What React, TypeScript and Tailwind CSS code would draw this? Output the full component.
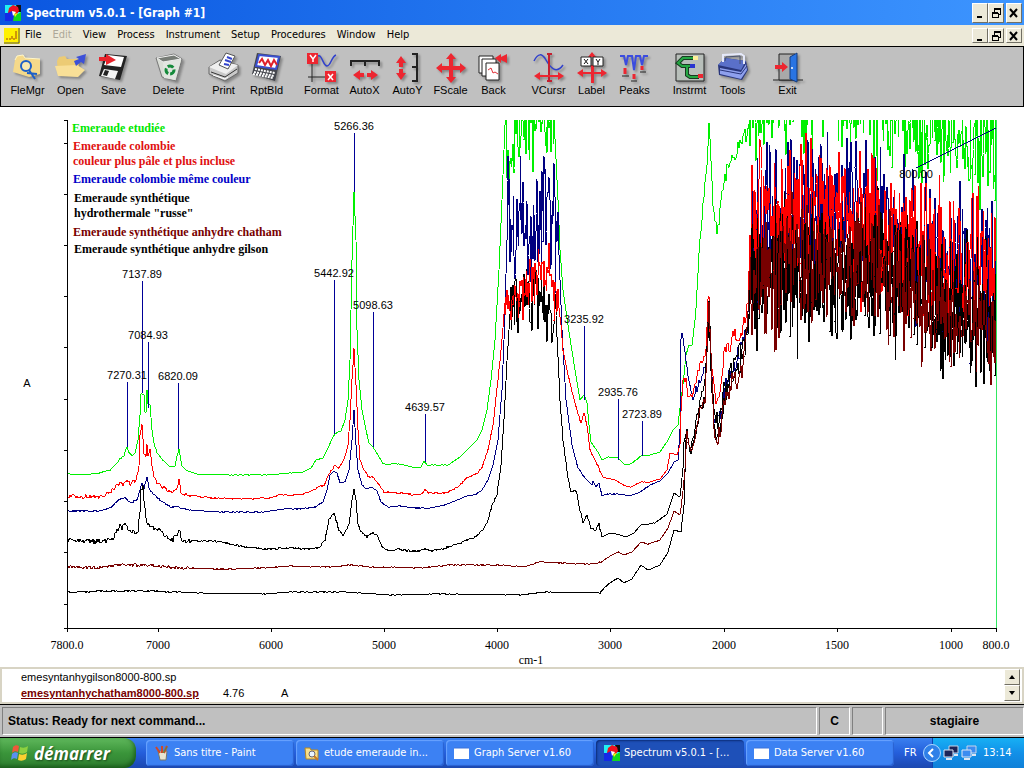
import type { ReactNode } from "react";

type Point = [number, number];

const menuItems = ["File", "Edit", "View", "Process", "Instrument", "Setup", "Procedures", "Window", "Help"];

/* ---------- toolbar drawings ---------- */

function Icon({ children }: { children: ReactNode }) {
  return (
    <svg viewBox="0 0 32 32" className="h-8 w-8 drop-shadow-[2px_2px_1px_rgba(0,0,0,0.3)]" aria-hidden="true">
      {children}
    </svg>
  );
}

const FileManagerIcon = () => (
  <Icon>
    <path d="M3 8 5 4l6-1 2 3 15 1v15L17 25 1 20z" fill="#f5d98a" />
    <path d="M3 8 5 4l6-1 2 3 15 1" fill="none" stroke="#fff6c8" />
    <circle cx="14" cy="14" r="5" fill="#f8e8b0" stroke="#1c5fc8" strokeWidth="2" />
    <path d="m17 18 6 9M15 21l10 1" fill="none" stroke="#1c5fc8" strokeWidth="2" />
  </Icon>
);

const OpenIcon = () => (
  <Icon>
    <path d="M2 9 4 5l6-1 2 3h12l-1 17L3 24z" fill="#eccb74" />
    <path d="M0 14 22 13l8 5-7 7-20-1z" fill="#f8df97" />
    <path d="m19 9 5-2-3-2 10-3-2 10-3-2-5 4z" fill="#3c50d8" />
  </Icon>
);

const SaveIcon = () => (
  <Icon>
    <path d="m7 2 22 2-7 24L1 24z" fill="#222" />
    <path d="m10 3 16 2-3 10-17-2z" fill="#fff" />
    <path d="m6 17 14 2-3 8-14-3z" fill="#f4f4f4" />
    <path d="m7 18 4 1-2 5-4-1z" fill="#222" />
    <path d="M1 5h7V2l10 6-10 5v-4H1z" fill="#e8232b" />
  </Icon>
);

const DeleteIcon = () => (
  <Icon>
    <path d="M3 6 21 2l8 5-6 22-14-4z" fill="#d9ddd6" stroke="#777" />
    <path d="m4 6 17-3 7 4-18 3z" fill="#777c76" stroke="#eee" />
    <path d="m10 10 1 16 11 2 6-20z" fill="#e2e5e0" />
    <circle cx="17" cy="18" r="4" fill="none" stroke="#158a3a" strokeWidth="3" strokeDasharray="6 2" />
  </Icon>
);

const PrintIcon = () => (
  <Icon>
    <path d="m1 15 11-7 18 5v8L17 29 1 22z" fill="#c9c9c9" stroke="#666" />
    <path d="m1 15 11-6 18 4-12 9z" fill="#efefef" />
    <path d="M11 13 18 1l9 3-7 13z" fill="#fff" stroke="#555" />
    <path d="m17 8 6 2m-4-5 5 2m-8 5 5 1" stroke="#3344cc" strokeWidth="2" />
    <path d="m3 20 14 5 12-8" fill="none" stroke="#333" />
    <path d="m5 23 12 4 3-2" stroke="#fff" fill="none" />
  </Icon>
);

const ReportIcon = () => (
  <Icon>
    <path d="m6 1 24 3-6 25L1 22z" fill="#44464d" />
    <path d="m8 3 20 2-3 12L5 14z" fill="#fff" stroke="#3b4fcf" strokeWidth="2" />
    <path d="m8 11 3-4 3 6 3-5 3 6 3-6 3 5" fill="none" stroke="#e0202a" strokeWidth="2" />
    <path d="m4 17 20 4M3 20l20 4M2 22l20 4" stroke="#fff" strokeWidth="2" strokeDasharray="2 1" />
  </Icon>
);

const FormatIcon = () => (
  <Icon>
    <path d="M6 12v18M2 25h20" stroke="#222" strokeWidth="1" />
    <path d="M12 4c4-2 5 10 9 10s4-9 9-11" fill="none" stroke="#3040cc" strokeWidth="1.5" />
    <path d="M1 1h11v11H1zM19 19h11v11H19z" fill="#ed2630" />
    <path d="m4 3 3 4 3-4M7 7v3m15 12 5 6m0-6-5 6" fill="none" stroke="#fff" strokeWidth="1.5" />
  </Icon>
);

const AutoXIcon = () => (
  <Icon>
    <path d="M2 14V9h28v5M16 9v5" fill="none" stroke="#222" strokeWidth="2" />
    <path d="m4 23 7-5v3h4v4h-4v3zM29 23l-7-5v3h-4v4h4v3z" fill="#ed2630" />
  </Icon>
);

const AutoYIcon = () => (
  <Icon>
    <path d="M20 2h5v27h-5M25 15h-5" fill="none" stroke="#222" strokeWidth="2" />
    <path d="m9 4 5 7h-3v4H7v-4H4zM9 28l5-7h-3v-4H7v4H4z" fill="#ed2630" />
  </Icon>
);

const FullScaleIcon = () => (
  <Icon>
    <path
      d="m16 1 5 6h-3v7h7v-3l6 5-6 5v-3h-7v7h3l-5 6-5-6h3v-7H7v3l-6-5 6-5v3h7V7h-3z"
      fill="#ed2630"
    />
  </Icon>
);

const BackIcon = () => (
  <Icon>
    <path d="M1 4h14v17H1z" fill="#fff" stroke="#222" />
    <path d="M4 7h14v17H4z" fill="#fff" stroke="#222" />
    <path d="M8 11h13v17H8z" fill="#fff" stroke="#222" />
    <path d="m10 18 3-2 2 5 2-1 3 2" fill="none" stroke="#e03038" />
    <path d="m17 6 6-4v3l6-3v9l-6-3v3z" fill="#ed2630" />
  </Icon>
);

const CursorIcon = () => (
  <Icon>
    <path d="M1 9C5 1 9 1 13 8s10 15 17 5" fill="none" stroke="#3040cc" strokeWidth="1.5" />
    <path d="M14 2h5m-5 27h5M16 2v27" stroke="#c51f30" strokeWidth="2" />
    <path d="m1 24 6-4v3h18v-3l6 4-6 4v-3H7v3z" fill="#ed2630" />
  </Icon>
);

const LabelIcon = () => (
  <Icon>
    <path d="m16 0 4 5H12zM15 13h3v18h-3z" fill="#ed2630" />
    <path d="m1 21 6-4v3h18v-3l6 4-6 4v-3H7v3z" fill="#ed2630" />
    <path d="M5 5h10v9H5zM17 5h10v9H17z" fill="#fff" stroke="#222" />
    <path d="m8 7 4 5m0-5-4 5m12-5 2 3 2-3m-2 3v3" fill="none" stroke="#111" />
  </Icon>
);

const PeaksIcon = () => (
  <Icon>
    <path d="M1 4h4l2 9 2-9h4l2 14 2-14h4l2 9 2-9h4" fill="none" stroke="#3b4ce0" strokeWidth="2" />
    <path d="M6 16v6m9 0v5m8-13v4" stroke="#ed2630" strokeWidth="3" />
    <path d="M3 24h7m2 5h6m3-9h6" stroke="#222" strokeWidth="1" />
  </Icon>
);

const InstrumentIcon = () => (
  <Icon>
    <path d="M2 2h28v27H2z" fill="#b8bfba" stroke="#222" />
    <path d="M21 6H9l-5 5 4 3h10m-5 0v9l3 2h9" fill="none" stroke="#183b20" strokeWidth="4" />
    <path d="M21 6H9l-5 5 4 3h10m-5 0v9l3 2h9" fill="none" stroke="#25a844" strokeWidth="2" />
    <path d="M19 4h5v4h-5z" fill="#ffee9a" />
    <path d="M16 12h5v4h-5z" fill="#2835d0" />
    <path d="M24 22h5v4h-5z" fill="#ed2630" />
  </Icon>
);

const ToolsIcon = () => (
  <Icon>
    <path d="m1 13 7-7 21 3 2 9-6 10L2 23z" fill="#29367c" />
    <path d="m1 13 7-7 21 3-5 9z" fill="#5a70c9" />
    <path d="m3 16 21 4 5-8 1 6-6 9-21-5z" fill="#8ea0ed" />
    <path d="m3 18 21 4 6-8" fill="none" stroke="#29367c" />
    <path d="M6 10V3l18-1 3 2v8" fill="none" stroke="#e5e9fa" strokeWidth="2" />
    <path d="M8 9 9 5l14-1v8" fill="none" stroke="#49536e" />
  </Icon>
);

const ExitIcon = () => (
  <Icon>
    <path d="M1 28h30" stroke="#222" strokeWidth="1" />
    <path d="M7 2h16v26H7z" fill="#a9a9a9" stroke="#222" />
    <path d="m18 5 7-4v29l-7-3z" fill="#2974e3" stroke="#153c7e" />
    <circle cx="20" cy="16" r="1" fill="#fff" />
    <path d="M3 13h7v-3l6 5-6 5v-3H3z" fill="#ed2630" />
  </Icon>
);

const toolGroups = [
  [
    { label: "FleMgr", icon: <FileManagerIcon /> },
    { label: "Open", icon: <OpenIcon /> },
    { label: "Save", icon: <SaveIcon /> },
  ],
  [{ label: "Delete", icon: <DeleteIcon /> }],
  [
    { label: "Print", icon: <PrintIcon /> },
    { label: "RptBld", icon: <ReportIcon /> },
  ],
  [
    { label: "Format", icon: <FormatIcon /> },
    { label: "AutoX", icon: <AutoXIcon /> },
    { label: "AutoY", icon: <AutoYIcon /> },
    { label: "FScale", icon: <FullScaleIcon /> },
    { label: "Back", icon: <BackIcon /> },
  ],
  [
    { label: "VCursr", icon: <CursorIcon /> },
    { label: "Label", icon: <LabelIcon /> },
    { label: "Peaks", icon: <PeaksIcon /> },
  ],
  [
    { label: "Instrmt", icon: <InstrumentIcon /> },
    { label: "Tools", icon: <ToolsIcon /> },
  ],
  [{ label: "Exit", icon: <ExitIcon /> }],
];

/* ---------- small shared icons ---------- */

function SpectrumLogo() {
  return (
    <svg viewBox="0 0 16 16" className="h-4 w-4 shrink-0" aria-hidden="true">
      <path d="M0 0h16v16H0z" fill="#20f0f0" />
      <path d="M0 8h5l3 8H0z" fill="#1428e8" />
      <path d="M11 0h5v7h-3z" fill="#111" />
      <path d="M4 3 8 0l5 2 1 4-2 3H7L3 8z" fill="#f01020" />
      <path d="m7 8 6 1 3-2v9H8z" fill="#10d820" />
      <path d="m3 8 4-2 2 4-1 6-4-2z" fill="#1428e8" />
      <path d="m7 6 4 1-3 4z" fill="#fff" />
      <path d="m9 9 4-1-3 4z" fill="#ffe820" />
    </svg>
  );
}

function WindowButtons({ height }: { height: string }) {
  const base =
    "flex w-4 items-center justify-center border border-t-white border-l-white border-r-[#716f64] border-b-[#716f64] bg-[#ece9d8]";
  return (
    <div className="flex">
      <button aria-label="Minimize" className={`${base} ${height}`}>
        <svg viewBox="0 0 12 12" className="h-3 w-3"><path d="M3 10h5" stroke="#000" strokeWidth="2" /></svg>
      </button>
      <button aria-label="Restore" className={`${base} ${height}`}>
        <svg viewBox="0 0 12 12" className="h-3 w-3" shapeRendering="crispEdges">
          <path d="M4 2h6v5H8M4 2v3M2 6h6v4H2z" fill="none" stroke="#000" />
          <path d="M4 2h7M2 6h6" stroke="#000" strokeWidth="2" />
        </svg>
      </button>
      <button aria-label="Close" className={`${base} ${height} ml-0.5`}>
        <svg viewBox="0 0 12 12" className="h-3 w-3"><path d="m2 2 7 8m0-8-7 8" stroke="#000" strokeWidth="2" /></svg>
      </button>
    </div>
  );
}

/* ---------- spectra ---------- */

// Small seeded generator so that the detector noise is the same on every render.
function seeded(seed: number) {
  let s = seed;
  return () => {
    s = (s * 1664525 + 1013904223) % 4294967296;
    return s / 4294967296;
  };
}

function valueAt(points: Point[], x: number) {
  for (let i = 1; i < points.length; i++) {
    if (x <= points[i][0]) {
      const [x0, y0] = points[i - 1];
      const [x1, y1] = points[i];
      return y0 + ((y1 - y0) * (x - x0)) / (x1 - x0);
    }
  }
  return points[points.length - 1][1];
}

function jitter(points: Point[], amount: number, rand: () => number, limit: number) {
  const out: Point[] = [];
  const last = points[points.length - 1][0];
  for (let x = points[0][0]; x <= last; x++) {
    const quiet = x > 190 && x < 600 ? 0.4 : 1;
    const scale = x > 600 && x < 680 ? 0.5 : x > 715 ? limit : x > 695 ? limit / 2 : amount * quiet;
    out.push([x, valueAt(points, x) + (rand() - 0.5) * scale]);
  }
  return out;
}

function noise(center: Point[], spread: number, rand: () => number) {
  const out: Point[] = [];
  const last = center[center.length - 1][0];
  for (let x = center[0][0]; x <= last; x += 0.625) {
    const r = rand() + rand() + rand() - 1.5;
    out.push([Math.round(x), valueAt(center, x) + r * spread]);
  }
  return out;
}

const toPoints = (points: Point[]) => points.map(([x, y]) => `${x},${y.toFixed(1)}`).join(" ");

type Series = {
  color: string;
  seed: number;
  wobble: number;
  tail: number;
  left: Point[];
  plateau?: Point[];
  plateauSpread: number;
  middle: Point[];
  end: Point[];
  endSpread: number;
};

const series: Series[] = [
  {
    color: "#00f000", seed: 11, wobble: 0.8, tail: 16, plateauSpread: 45, endSpread: 58,
    left: [[67,474],[85,475],[100,473],[110,470],[117,463],[120,459],[124,456],[126,449],[127,447],[129,453],[132,456],[135,453],[138,440],[140,415],[141,394],[144,395],[145,412],[146,413],[147,390],[148,404],[150,405],[152,430],[154,443],[157,453],[163,460],[170,467],[175,466],[177,456],[179,449],[180,455],[182,466],[187,471],[197,474],[230,475],[265,475],[290,473],[303,472],[311,468],[316,460],[323,458],[328,448],[333,437],[336,433],[341,431],[345,420],[348,400],[350,360],[352,260],[354,192],[356,240],[357,330],[359,380],[362,410],[366,430],[369,443],[373,447],[378,455],[383,464],[400,464],[416,468],[421,467],[424,461],[427,465],[448,465],[460,457],[470,447],[477,440],[482,430],[487,410],[491,380],[495,340],[499,270],[502,200],[505,125]],
    plateau: [[505,130],[508,155],[512,155],[517,125],[530,112],[545,112],[554,118]],
    middle: [[554,118],[558,200],[560,250],[563,290],[569,332],[575,370],[580,400],[584,395],[587,403],[589,425],[591,442],[595,448],[598,452],[602,460],[608,457],[618,458],[625,465],[631,464],[641,456],[650,455],[660,452],[668,440],[673,430],[678,425],[681,400],[683,385],[686,355],[689,345],[692,345],[695,320],[697,290],[700,240],[703,205],[707,165],[709,120],[711,160],[713,205],[716,225],[718,227],[721,205],[724,180],[728,168],[732,158],[738,150],[744,138],[749,130]],
    end: [[749,125],[765,92],[800,96],[850,98],[880,102],[915,124],[945,136],[970,140],[996,144]],
  },
  {
    color: "#000080", seed: 23, wobble: 1.6, tail: 20, plateauSpread: 62, endSpread: 72,
    left: [[67,511],[100,511],[112,507],[118,500],[125,498],[130,503],[137,500],[140,490],[142,482],[144,488],[147,477],[149,488],[153,494],[160,500],[170,507],[178,507],[190,510],[220,512],[265,512],[285,509],[300,509],[315,507],[323,502],[327,490],[330,475],[334,471],[337,473],[340,483],[345,482],[349,470],[352,440],[354,410],[356,445],[358,470],[362,485],[366,489],[372,487],[377,491],[381,502],[388,507],[400,506],[415,508],[430,508],[445,505],[467,496],[475,495],[482,490],[488,480],[493,465],[498,440],[502,390],[504,340],[507,240]],
    plateau: [[507,220],[530,230],[545,205],[558,220]],
    middle: [[558,230],[562,330],[566,400],[572,445],[578,468],[585,478],[590,483],[592,485],[593,481],[596,487],[599,483],[602,496],[607,494],[620,494],[630,496],[640,492],[650,485],[660,481],[668,473],[674,462],[678,460],[680,430],[681,340],[682,333],[684,345],[688,375],[693,400],[698,385],[702,375],[706,360],[709,310],[712,380],[714,420],[717,425],[720,415],[724,395],[729,375],[734,365],[738,355],[743,345],[748,320],[751,240]],
    end: [[751,235],[765,218],[800,208],[850,212],[900,232],[940,258],[996,275]],
  },
  {
    color: "#000000", seed: 37, wobble: 5, tail: 20, plateauSpread: 32, endSpread: 62,
    left: [[67,541],[100,541],[112,540],[117,530],[120,525],[122,528],[125,524],[129,532],[135,532],[138,530],[140,510],[141,490],[143,487],[145,510],[147,525],[155,528],[165,535],[173,540],[179,530],[183,541],[200,541],[215,541],[230,544],[245,547],[265,549],[290,548],[310,549],[320,547],[325,540],[329,520],[334,513],[339,530],[343,535],[349,525],[352,500],[354,489],[356,500],[358,525],[362,533],[367,537],[373,532],[378,537],[382,547],[390,551],[398,549],[410,551],[420,551],[425,548],[430,551],[445,548],[460,543],[475,537],[483,530],[488,520],[492,505],[497,495],[501,465],[504,420],[507,360],[510,315]],
    plateau: [[510,315],[525,300],[545,298],[556,315]],
    middle: [[556,315],[560,400],[563,440],[568,478],[571,492],[576,490],[580,510],[583,522],[587,515],[591,528],[596,530],[599,522],[602,537],[610,533],[620,535],[626,537],[634,533],[641,525],[655,523],[667,514],[674,493],[680,497],[683,470],[684,440],[687,430],[690,450],[695,430],[700,400],[705,380],[709,320],[712,390],[715,415],[718,420],[724,390],[732,370],[740,350],[748,330],[751,260]],
    end: [[751,265],[800,260],[850,265],[890,262],[940,290],[996,310]],
  },
  {
    color: "#ff0000", seed: 41, wobble: 4, tail: 12, plateauSpread: 26, endSpread: 66,
    left: [[67,496],[100,497],[110,492],[118,485],[120,482],[123,484],[127,479],[130,484],[136,480],[139,465],[140,435],[142,426],[144,455],[146,455],[147,446],[148,455],[150,450],[152,467],[155,480],[160,485],[168,490],[173,493],[177,490],[179,479],[181,492],[187,495],[210,498],[240,499],[270,498],[280,495],[300,495],[312,491],[318,487],[324,485],[329,474],[335,465],[339,468],[344,460],[348,445],[350,420],[352,380],[354,349],[356,385],[358,430],[360,460],[364,470],[368,476],[374,478],[379,484],[384,492],[400,493],[415,495],[422,494],[425,490],[428,493],[445,493],[458,487],[467,478],[478,473],[482,467],[488,450],[493,425],[498,380],[502,340],[505,303]],
    plateau: [[505,303],[515,296],[530,284],[540,266],[550,274],[558,300]],
    middle: [[558,300],[561,325],[563,350],[568,375],[573,395],[577,410],[581,423],[584,412],[587,425],[590,450],[595,460],[599,468],[603,477],[615,480],[625,486],[631,487],[641,482],[650,482],[660,479],[667,470],[670,453],[677,455],[680,445],[681,410],[683,380],[686,380],[688,395],[692,397],[695,385],[700,365],[703,358],[706,352],[708,300],[709,298],[710,330],[712,370],[716,400],[718,400],[721,380],[724,355],[728,345],[731,348],[734,330],[738,340],[742,330],[745,320],[748,300],[750,240]],
    end: [[750,240],[760,215],[800,205],[850,212],[900,228],[940,256],[996,268]],
  },
  {
    color: "#000000", seed: 59, wobble: 1.6, tail: 20, plateauSpread: 0, endSpread: 62,
    left: [[67,592],[120,591],[150,591],[200,593],[270,594],[290,592],[345,592],[390,595],[440,594],[520,595],[545,592],[600,593]],
    middle: [[600,593],[604,588],[610,583],[618,578],[624,583],[632,579],[641,565],[648,570],[660,565],[668,552],[674,530],[681,532],[684,505],[686,440],[689,445],[691,453],[696,430],[700,410],[705,400],[709,300],[712,380],[714,425],[717,442],[721,425],[725,400],[730,385],[737,375],[744,355],[748,325],[751,285]],
    end: [[751,275],[790,278],[830,290],[890,278],[940,312],[996,332]],
  },
  {
    color: "#780000", seed: 67, wobble: 3, tail: 16, plateauSpread: 0, endSpread: 62,
    left: [[67,567],[100,568],[120,565],[150,565],[180,568],[220,569],[265,568],[290,566],[330,567],[350,565],[370,567],[420,568],[450,565],[500,565],[525,567],[540,562],[560,563],[590,564],[600,563]],
    middle: [[600,563],[610,556],[618,552],[624,555],[632,552],[641,542],[648,544],[660,540],[668,528],[674,511],[680,515],[683,490],[685,470],[687,430],[688,440],[691,452],[695,440],[700,410],[705,400],[709,300],[712,380],[714,430],[717,442],[721,425],[725,400],[730,390],[733,375],[737,382],[742,370],[746,340],[750,275]],
    end: [[750,268],[800,268],[850,272],[900,284],[940,314],[996,328]],
  },
];

function tracePoints(s: Series) {
  const rand = seeded(s.seed);
  return toPoints([
    ...jitter(s.left, s.wobble, rand, s.tail),
    ...(s.plateau ? noise(s.plateau, s.plateauSpread, rand) : []),
    ...jitter(s.middle, s.wobble, rand, s.tail),
    ...noise(s.end, s.endSpread, rand),
  ]);
}

const peaks = [
  { label: "7270.31", x: 127, top: 382, bottom: 447 },
  { label: "7137.89", x: 142, top: 281, bottom: 393 },
  { label: "7084.93", x: 148, top: 342, bottom: 408 },
  { label: "6820.09", x: 178, top: 383, bottom: 449 },
  { label: "5442.92", x: 334, top: 280, bottom: 434 },
  { label: "5266.36", x: 354, top: 133, bottom: 192 },
  { label: "5098.63", x: 373, top: 312, bottom: 447 },
  { label: "4639.57", x: 425, top: 414, bottom: 462 },
  { label: "3235.92", x: 584, top: 326, bottom: 400 },
  { label: "2935.76", x: 618, top: 399, bottom: 460 },
  { label: "2723.89", x: 642, top: 421, bottom: 456 },
];

const legend = [
  { text: "Emeraude etudiée", y: 132, x: 72, color: "#00e800" },
  { text: "Emeraude colombie", y: 150, x: 73, color: "#e01010" },
  { text: "couleur plus pâle et plus incluse", y: 165, x: 73, color: "#e01010" },
  { text: "Emeraude colombie même couleur", y: 183, x: 73, color: "#0000c8" },
  { text: "Emeraude synthétique", y: 202, x: 74, color: "#000000" },
  { text: "hydrothermale \"russe\"", y: 217, x: 74, color: "#000000" },
  { text: "Emeraude synthétique anhydre chatham", y: 236, x: 73, color: "#780000" },
  { text: "Emeraude synthétique anhydre gilson", y: 253, x: 74, color: "#000000" },
];

const xTicks = [
  { x: 67, label: "7800.0" },
  { x: 158, label: "7000" },
  { x: 271, label: "6000" },
  { x: 384, label: "5000" },
  { x: 497, label: "4000" },
  { x: 610, label: "3000" },
  { x: 724, label: "2000" },
  { x: 837, label: "1500" },
  { x: 951, label: "1000" },
  { x: 996, label: "800.0" },
];

const yTicks = [120, 143, 194, 245, 296, 347, 399, 450, 501, 552, 604];

function Chart() {
  return (
    <svg viewBox="0 107 1024 560" className="block w-full" role="img" aria-label="Absorbance spectra">
      <clipPath id="plot-area">
        <rect x="67" y="120" width="930" height="509" />
      </clipPath>
      <g fill="none" strokeWidth="1" shapeRendering="crispEdges">
        <g clipPath="url(#plot-area)">
          {series.map((s) => (
            <polyline key={s.seed} points={tracePoints(s)} stroke={s.color} strokeLinejoin="bevel" />
          ))}
        </g>
        <path d="M996.5 120V628" stroke="#30e860" />
        <path d="M996 128 916 168" stroke="#000080" />
        {peaks.map((p) => (
          <path key={p.label} d={`M${p.x + 0.5} ${p.top}V${p.bottom}`} stroke="#000098" />
        ))}
        <path d="M67.5 120V632M64 628.5H996" stroke="#000" />
        {yTicks.map((y) => (
          <path key={y} d={`M64 ${y + 0.5}h3`} stroke="#000" />
        ))}
        {xTicks.map((t) => (
          <path key={t.label} d={`M${t.x + 0.5} 628v4`} stroke="#000" />
        ))}
      </g>
      <g className="font-['Liberation_Sans',sans-serif] text-[11px]" textAnchor="middle">
        {peaks.map((p) => (
          <text key={p.label} x={p.x} y={p.top - 3}>{p.label}</text>
        ))}
        <text x="916" y="178">800.00</text>
        <text x="27" y="387">A</text>
      </g>
      <g className="font-['Liberation_Serif',serif] text-[12px]" textAnchor="middle">
        {xTicks.map((t) => (
          <text key={t.label} x={t.x} y="649">{t.label}</text>
        ))}
        <text x="531" y="664">cm-1</text>
      </g>
      <g className="font-['Liberation_Serif',serif] text-[12px] font-bold">
        {legend.map((l) => (
          <text key={l.text} x={l.x} y={l.y} fill={l.color}>{l.text}</text>
        ))}
      </g>
    </svg>
  );
}

/* ---------- taskbar ---------- */

const PaintIcon = () => (
  <svg viewBox="0 0 16 16" className="h-4 w-4 shrink-0" aria-hidden="true">
    <path d="M4 6h9l-1 9H6z" fill="#e8e4d0" stroke="#776" />
    <path d="m6 8-4-6m6 6V1m2 7 3-7" stroke="#d04828" strokeWidth="2" />
    <path d="m9 8 4-6" stroke="#40a040" strokeWidth="1" />
  </svg>
);

const FolderIcon = () => (
  <svg viewBox="0 0 16 16" className="h-4 w-4 shrink-0" aria-hidden="true">
    <path d="M1 3h5l1 2h7v9H2z" fill="#f8e08a" stroke="#b88820" />
    <circle cx="8" cy="9" r="3" fill="#e8f4ff" stroke="#667" />
    <path d="m10 11 4 4" stroke="#c87820" strokeWidth="2" />
  </svg>
);

const BlankWindowIcon = () => (
  <svg viewBox="0 0 16 16" className="h-4 w-4 shrink-0" aria-hidden="true">
    <path d="M0 3h15v11H0z" fill="#fff" />
    <path d="M0 3h15" stroke="#3a70d8" />
  </svg>
);

const NetworkIcon = ({ screen }: { screen: string }) => (
  <svg viewBox="0 0 16 16" className="h-4 w-4 shrink-0" aria-hidden="true">
    <path d="M6 1h9v7H6z" fill={screen} stroke="#c8d4e8" />
    <path d="M1 5h9v7H1z" fill={screen} stroke="#dde6f4" />
    <path d="M3 14h6M11 10h4" stroke="#dde6f4" strokeWidth="2" />
  </svg>
);

const tasks = [
  { label: "Sans titre - Paint", icon: <PaintIcon />, active: false },
  { label: "etude emeraude in...", icon: <FolderIcon />, active: false },
  { label: "Graph Server v1.60", icon: <BlankWindowIcon />, active: false },
  { label: "Spectrum v5.0.1 - [...", icon: <SpectrumLogo />, active: true },
  { label: "Data Server v1.60", icon: <BlankWindowIcon />, active: false },
];

function Taskbar() {
  return (
    <footer className="flex h-[30px] bg-gradient-to-b from-[#3a80f0] via-[#245edb] to-[#1c48b0] text-[11px] text-white">
      <button className="flex w-[136px] shrink-0 items-center gap-1 rounded-r-xl bg-gradient-to-b from-[#5fb85c] via-[#3a953a] to-[#2f7f30] pl-2.5 shadow-[inset_-2px_-2px_4px_rgba(0,50,0,0.5)]">
        <svg viewBox="0 0 20 20" className="h-5 w-5" aria-hidden="true">
          <path d="M3 4c2-2 4-2 6-1L8 9c-2-1-4-1-6 1z" fill="#f0583a" />
          <path d="M10 4c3 1 5 1 8-1l-1 6c-3 2-5 2-8 1z" fill="#8cd040" />
          <path d="M2 11c2-2 4-2 6-1l-1 6c-2-1-4-1-6 1z" fill="#5a90f0" />
          <path d="M9 11c3 1 5 1 8-1l-1 6c-3 2-5 2-8 1z" fill="#fcd030" />
        </svg>
        <span className="font-['Open_Sans',sans-serif] text-[17px] leading-none font-bold italic [text-shadow:1px_1px_2px_#1a4a1a]">
          démarrer
        </span>
      </button>
      <nav className="ml-2.5 flex min-w-0 flex-1 pt-0.5 pb-0.5">
        {tasks.map((t) => (
          <button
            key={t.label}
            className={`mr-0.5 flex max-w-[148px] min-w-0 flex-1 items-center gap-1 rounded-sm pl-2 whitespace-nowrap ${
              t.active
                ? "bg-[#1e50b8] shadow-[inset_1px_1px_2px_#0c2c78]"
                : "bg-[#3c81f3] shadow-[inset_1px_1px_1px_#6aa4ff,inset_-1px_-1px_1px_#2860d0]"
            }`}
          >
            {t.icon}
            <span>{t.label}</span>
          </button>
        ))}
      </nav>
      <div className="flex w-7 items-center">FR</div>
      <div className="flex w-[92px] items-center gap-0.5 border-l border-[#1042af] bg-gradient-to-b from-[#18b0f4] via-[#1290e8] to-[#1080d8]">
        <button aria-label="Show hidden icons" className="-ml-2.5 flex h-[18px] w-[18px] items-center justify-center rounded-full border border-[#b0d8ff] bg-[#2f80e8]">
          <svg viewBox="0 0 10 10" className="h-2.5 w-2.5"><path d="M6 1 2 5l4 4" fill="none" stroke="#fff" strokeWidth="2" /></svg>
        </button>
        <NetworkIcon screen="#1c2458" />
        <NetworkIcon screen="#3c8cf0" />
        <span className="ml-1">13:14</span>
      </div>
    </footer>
  );
}

const pane =
  "flex items-center border border-t-[#808080] border-l-[#808080] border-r-white border-b-white bg-[#c0c0c0]";

export default function App() {
  return (
    <div className="flex min-h-screen flex-col bg-white font-['DejaVu_Sans_Condensed','DejaVu_Sans',sans-serif] text-black">
      <header className="flex h-[25px] items-center gap-[5px] bg-gradient-to-r from-[#0a56e0] to-[#3d95ff] pr-0.5 pl-[5px]">
        <SpectrumLogo />
        <h1 className="flex-1 text-[12px] font-bold text-white">Spectrum v5.0.1 - [Graph #1]</h1>
        <WindowButtons height="h-5" />
      </header>

      <div className="flex h-[21px] items-center bg-[#ece9d8] pr-0.5 pl-1 text-[11px]">
        <svg viewBox="0 0 16 16" className="mr-[5px] h-4 w-4" aria-hidden="true">
          <path d="M0 0h16v16H0z" fill="#fff000" />
          <path d="M15 0v15H0" fill="none" stroke="#555" />
          <path d="M2 11h2m1 0h2m1 0V8m1 3h2m1 0V3" fill="none" stroke="#a04010" />
        </svg>
        <nav className="flex flex-1">
          {menuItems.map((item) => (
            <button key={item} className={`mr-[11px] ${item === "Edit" ? "text-[#aca899]" : ""}`}>
              {item}
            </button>
          ))}
        </nav>
        <WindowButtons height="h-[15px]" />
      </div>

      <div className="flex h-[61px] gap-3 border border-black bg-[#c0c0c0] pt-[5px] pl-[5px]" role="toolbar">
        {toolGroups.map((group) => (
          <div key={group[0].label} className="flex">
            {group.map((tool) => (
              <button key={tool.label} className="flex w-[43px] flex-col items-center justify-start">
                {tool.icon}
                <span className="font-['Liberation_Sans',sans-serif] text-[11px] leading-[12px]">{tool.label}</span>
              </button>
            ))}
          </div>
        ))}
      </div>

      <main className="flex-1">
        <Chart />
      </main>

      <section className="flex h-[37px] justify-between border-2 border-[#d8d4c4] bg-white pr-0.5 font-['Liberation_Sans',sans-serif] text-[11px] leading-[16px]">
        <div className="pl-[19px]">
          <div>emesyntanhygilson8000-800.sp</div>
          <div className="flex">
            <a href="#" className="font-bold text-[#780000] underline">emesyntanhychatham8000-800.sp</a>
            <span className="ml-6 w-[58px]">4.76</span>
            <span>A</span>
          </div>
        </div>
        <div className="flex flex-col">
          <button aria-label="Scroll up" className="flex h-4 w-4 items-center justify-center border border-t-white border-l-white border-r-[#716f64] border-b-[#716f64] bg-[#ece9d8]">
            <svg viewBox="0 0 6 4" className="h-1 w-1.5"><path d="M3 0 6 4H0z" /></svg>
          </button>
          <button aria-label="Scroll down" className="flex h-4 w-4 items-center justify-center border border-t-white border-l-white border-r-[#716f64] border-b-[#716f64] bg-[#ece9d8]">
            <svg viewBox="0 0 6 4" className="h-1 w-1.5"><path d="M3 4 6 0H0z" /></svg>
          </button>
        </div>
      </section>

      <section className="flex h-[34px] gap-0.5 border-y border-black bg-[#c0c0c0] py-0.5 pl-0.5 font-['Liberation_Sans',sans-serif] text-[12px] font-bold">
        <div className={`${pane} flex-1 pl-[5px]`}>Status: Ready for next command...</div>
        <div className={`${pane} w-[31px] justify-center`}>C</div>
        <div className={`${pane} w-[31px]`} />
        <div className={`${pane} w-[139px] justify-center`}>stagiaire</div>
      </section>

      <Taskbar />
    </div>
  );
}
